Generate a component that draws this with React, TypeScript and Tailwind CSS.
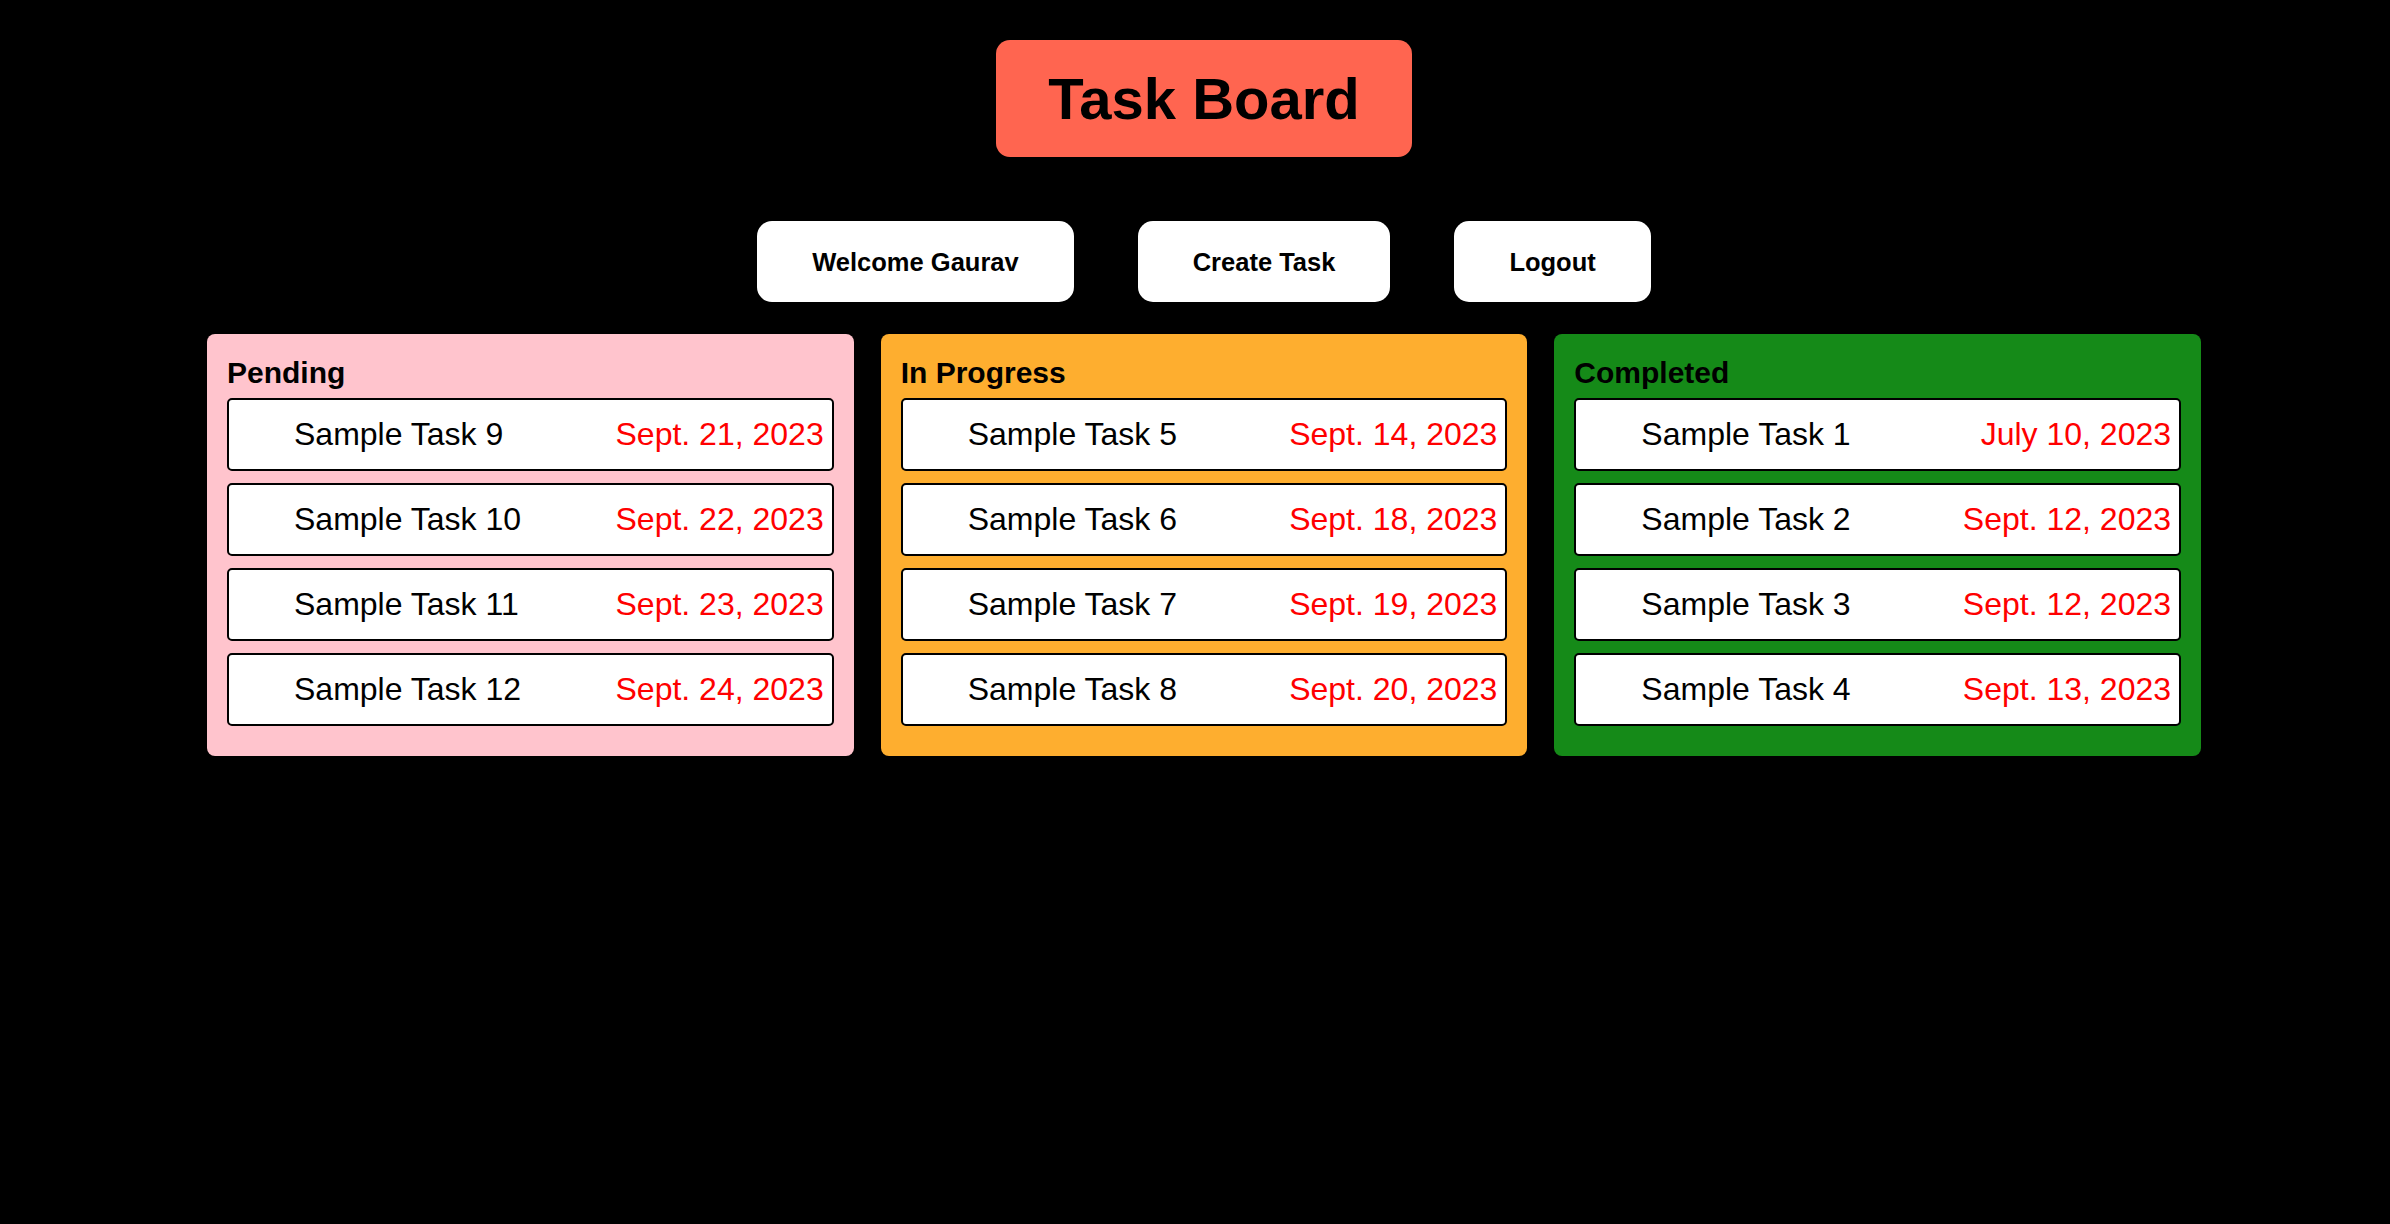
import React from "react";

type Task = { name: string; due: string };

const columns: { title: string; bg: string; tasks: Task[] }[] = [
  {
    title: "Pending",
    bg: "bg-[#ffc4cd]",
    tasks: [
      { name: "Sample Task 9", due: "Sept. 21, 2023" },
      { name: "Sample Task 10", due: "Sept. 22, 2023" },
      { name: "Sample Task 11", due: "Sept. 23, 2023" },
      { name: "Sample Task 12", due: "Sept. 24, 2023" },
    ],
  },
  {
    title: "In Progress",
    bg: "bg-[#feae2f]",
    tasks: [
      { name: "Sample Task 5", due: "Sept. 14, 2023" },
      { name: "Sample Task 6", due: "Sept. 18, 2023" },
      { name: "Sample Task 7", due: "Sept. 19, 2023" },
      { name: "Sample Task 8", due: "Sept. 20, 2023" },
    ],
  },
  {
    title: "Completed",
    bg: "bg-[#158a18]",
    tasks: [
      { name: "Sample Task 1", due: "July 10, 2023" },
      { name: "Sample Task 2", due: "Sept. 12, 2023" },
      { name: "Sample Task 3", due: "Sept. 12, 2023" },
      { name: "Sample Task 4", due: "Sept. 13, 2023" },
    ],
  },
];

function NavButton({ label }: { label: string }) {
  return (
    <button className="bg-white text-black rounded-[15px] h-[81px] px-[55px] text-[25.5px] leading-[30px] font-bold">
      {label}
    </button>
  );
}

function TaskCard({ task }: { task: Task }) {
  return (
    <div className="bg-white border-2 border-black rounded-[5px] h-[73px] flex items-center justify-between pl-[65px] pr-[8px] text-[32px] leading-[37px]">
      <span className="text-black">{task.name}</span>
      <span className="text-[#ff0000]">{task.due}</span>
    </div>
  );
}

export default function App() {
  return (
    <div className="min-h-[1224px] bg-black pl-[207px] font-['Liberation_Sans',Arial,sans-serif]">
      <div className="w-[1994px] flex flex-col items-center">
        {/* header */}
        <div className="mt-[40px] bg-[#ff6550] rounded-[14px] h-[117px] px-[52px] flex items-center">
          <h1 className="text-[58px] leading-[66px] font-bold text-black">Task Board</h1>
        </div>

        <div className="mt-[64px] flex gap-[64px]">
          <NavButton label="Welcome Gaurav" />
          <NavButton label="Create Task" />
          <NavButton label="Logout" />
        </div>

        {/* board */}
        <div className="mt-[32px] w-full flex gap-[27px]">
          {columns.map((col) => (
            <div key={col.title} className={`${col.bg} w-[647px] rounded-[8px] px-[20px] pt-[21px] pb-[30px]`}>
              <h2 className="text-[30px] leading-[35px] font-bold text-black">{col.title}</h2>
              <div className="mt-[8px] flex flex-col gap-[12px]">
                {col.tasks.map((t) => (
                  <TaskCard key={t.name} task={t} />
                ))}
              </div>
            </div>
          ))}
        </div>
      </div>
    </div>
  );
}
